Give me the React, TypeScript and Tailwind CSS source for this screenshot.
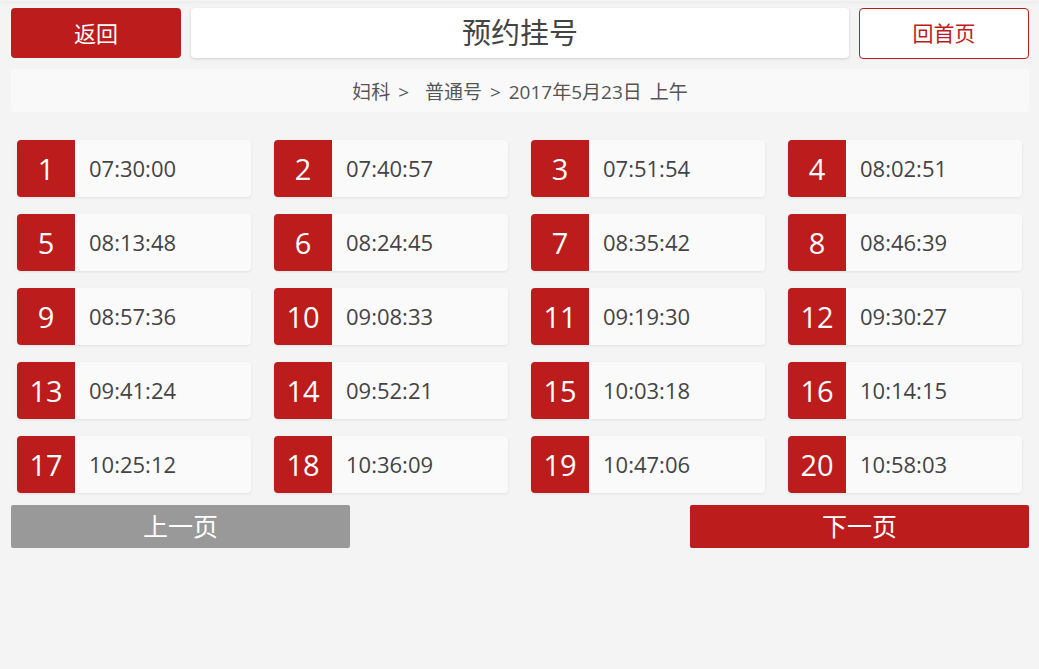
import { useState } from 'react'

const times = [
  '07:30:00', '07:40:57', '07:51:54', '08:02:51',
  '08:13:48', '08:24:45', '08:35:42', '08:46:39',
  '08:57:36', '09:08:33', '09:19:30', '09:30:27',
  '09:41:24', '09:52:21', '10:03:18', '10:14:15',
  '10:25:12', '10:36:09', '10:47:06', '10:58:03',
]

const font = { fontFamily: '"Open Sans", "Noto Sans CJK SC", sans-serif' }

function Slot({ no, time }: { no: number; time: string }) {
  return (
    <div className="flex h-[57px] overflow-hidden rounded-[4px] bg-[#fafafa] shadow-[0_1px_3px_rgba(0,0,0,0.08)]">
      <div className="flex w-[58px] shrink-0 items-center justify-center bg-[#bc1c1c] text-[29px] text-white">
        {no}
      </div>
      <div className="flex items-center pl-[14px] text-[22px] text-[#444]">{time}</div>
    </div>
  )
}

export default function App() {
  const [page, setPage] = useState(1)

  return (
    <div className="min-h-[669px] bg-[#f4f4f4]" style={font}>
      <div className="h-[1px] shadow-[0_1px_4px_rgba(0,0,0,0.15)]" />
      <div className="pl-[11px] pr-[10px] pt-[7px]">
        <div className="flex gap-[10px]">
          <button className="flex h-[50px] w-[170px] items-center justify-center rounded-[4px] bg-[#bc1c1c] text-[22px] text-white">
            返回
          </button>
          <div className="flex h-[50px] flex-1 items-center justify-center rounded-[4px] bg-white text-[29px] text-[#444] shadow-[0_1px_3px_rgba(0,0,0,0.15)]">
            预约挂号
          </div>
          <button className="flex h-[51px] w-[170px] items-center justify-center rounded-[4px] border border-[#bc1c1c] bg-white text-[21px] text-[#bc1c1c]">
            回首页
          </button>
        </div>

        <div className="mt-[10px] flex h-[43px] items-center justify-center rounded-[3px] bg-[#f9f9f9] pt-[3px] text-[19px] text-[#555] [word-spacing:3px]">
          妇科 &gt;&nbsp;&nbsp;普通号 &gt; 2017年5月23日 上午
        </div>

        <div className="mt-[28px] grid grid-cols-4 gap-x-[23px] gap-y-[17px] pl-[6px] pr-[7px]">
          {times.map((t, i) => (
            <Slot key={i} no={(page - 1) * 20 + i + 1} time={t} />
          ))}
        </div>

        <div className="mt-[12px] flex justify-between">
          <button
            className="flex h-[43px] w-[339px] items-center justify-center rounded-[2px] bg-[#999] text-[25px] text-white"
            onClick={() => setPage(Math.max(1, page - 1))}
          >
            上一页
          </button>
          <button
            className="flex h-[43px] w-[339px] items-center justify-center rounded-[2px] bg-[#bc1c1c] text-[25px] text-white"
            onClick={() => setPage(page)}
          >
            下一页
          </button>
        </div>
      </div>
    </div>
  )
}
